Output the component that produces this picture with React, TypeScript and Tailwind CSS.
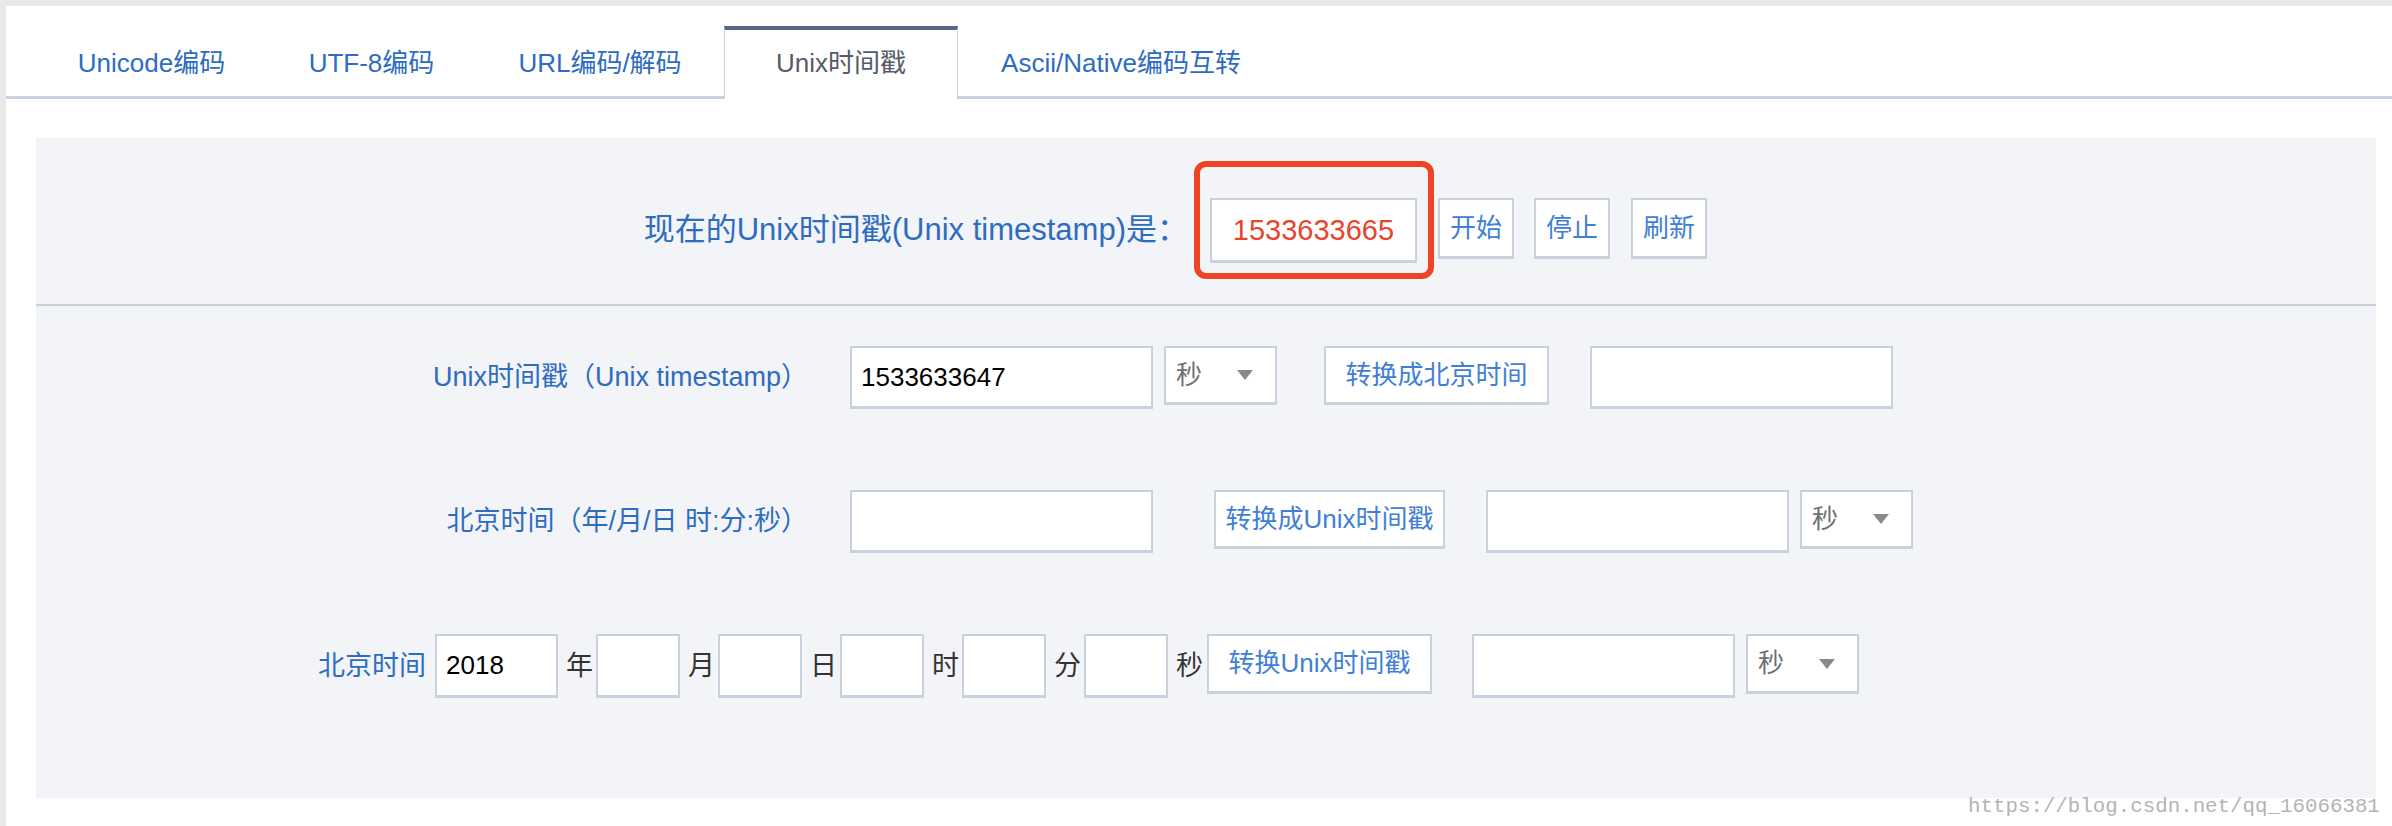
import React from "react";

const tabs = [
  { label: "Unicode编码", w: "w-[231px]" },
  { label: "UTF-8编码", w: "w-[209px]" },
  { label: "URL编码/解码", w: "w-[248px]" },
  { label: "Unix时间戳", w: "w-[234px]", active: true },
  { label: "Ascii/Native编码互转", w: "w-[326px]" },
];

function Box({ className = "", value = "", text = "text-black" }: { className?: string; value?: string; text?: string }) {
  return (
    <input
      readOnly
      value={value}
      className={`bg-white border-2 border-b-[3px] border-[#c9d0de] pl-[9px] text-[26px] outline-none ${text} ${className}`}
    />
  );
}

function Btn({ children, className = "" }: { children: React.ReactNode; className?: string }) {
  return (
    <button className={`bg-white border-2 border-b-[3px] border-[#c9d0de] text-[26px] text-[#3f80d6] flex items-center justify-center ${className}`}>
      {children}
    </button>
  );
}

function Unit({ className = "" }: { className?: string }) {
  return (
    <div className={`bg-white border-2 border-b-[3px] border-[#c9d0de] w-[113px] h-[59px] flex items-center justify-between pl-[10px] pr-[22px] ${className}`}>
      <span className="text-[26px] text-[#6f6f6f]">秒</span>
      <svg width="16" height="10" viewBox="0 0 16 10">
        <path d="M0 0h16L8 10z" fill="#8a8a8a" />
      </svg>
    </div>
  );
}

function Char({ c }: { c: string }) {
  return <span className="ml-[8px] mr-[3px] w-[27px] h-[64px] flex items-center text-[27px] text-[#333]">{c}</span>;
}

export default function App() {
  return (
    <div className="relative w-[2392px] h-[826px] bg-[#e8e8e8] pt-[6px] pl-[6px] overflow-hidden font-['Liberation_Sans','Noto_Sans_CJK_SC',sans-serif]">
      <div className="bg-white h-full flex flex-col">
        {/* tab bar */}
        <div className="h-[93px] flex items-end pl-[30px] border-b-[3px] border-[#c8cfdd]">
          {tabs.map((t) =>
            t.active ? (
              <div
                key={t.label}
                className={`${t.w} h-[73px] -mb-[3px] pb-[3px] bg-white border-t-4 border-t-[#5a6687] border-x border-x-[#c8cfdd] flex items-center justify-center text-[26px] text-[#555b68]`}
              >
                {t.label}
              </div>
            ) : (
              <div key={t.label} className={`${t.w} h-[66px] flex items-center justify-center text-[26px] text-[#2d6cc2]`}>
                {t.label}
              </div>
            )
          )}
        </div>

        {/* panel */}
        <div className="mt-[39px] ml-[30px] w-[2340px] h-[660px] bg-[#f3f4f8]">
          <div className="h-[168px] border-b-2 border-[#c8cfdd] flex items-start pt-[60px] pl-[601px]">
            <div className="w-[551px] h-[65px] mr-[22px] flex items-center justify-end text-[31px] text-[#2e6cc0] whitespace-nowrap">
              现在的Unix时间戳(Unix timestamp)是：
            </div>
            <div className="relative">
              <input
                readOnly
                value="1533633665"
                className="w-[207px] h-[65px] bg-white border-2 border-b-[3px] border-[#c9d0de] text-center text-[29px] text-[#e8442b] outline-none"
              />
              <span className="absolute -left-[16px] -top-[37px] w-[240px] h-[118px] border-[6px] border-[#ee4325] rounded-[12px]" />
            </div>
            <Btn className="ml-[21px] w-[76px] h-[61px]">开始</Btn>
            <Btn className="ml-[20px] w-[76px] h-[61px]">停止</Btn>
            <Btn className="ml-[21px] w-[76px] h-[61px]">刷新</Btn>
          </div>

          {/* row 1 */}
          <div className="mt-[40px] flex items-start">
            <div className="w-[772px] h-[63px] flex items-center justify-end text-[27px] text-[#2e6cc0] whitespace-nowrap">
              Unix时间戳（Unix timestamp）
            </div>
            <Box className="ml-[42px] w-[303px] h-[63px]" value="1533633647" />
            <Unit className="ml-[11px]" />
            <Btn className="ml-[47px] w-[225px] h-[59px]">转换成北京时间</Btn>
            <Box className="ml-[41px] w-[303px] h-[63px]" />
          </div>

          {/* row 2 */}
          <div className="mt-[81px] flex items-start">
            <div className="w-[772px] h-[63px] flex items-center justify-end text-[27px] text-[#2e6cc0] whitespace-nowrap">
              北京时间（年/月/日 时:分:秒）
            </div>
            <Box className="ml-[42px] w-[303px] h-[63px]" />
            <Btn className="ml-[61px] w-[231px] h-[59px]">转换成Unix时间戳</Btn>
            <Box className="ml-[41px] w-[303px] h-[63px]" />
            <Unit className="ml-[11px]" />
          </div>

          {/* row 3 */}
          <div className="mt-[81px] flex items-start pl-[282px]">
            <div className="h-[64px] flex items-center text-[27px] text-[#2e6cc0] whitespace-nowrap">北京时间</div>
            <Box className="ml-[9px] w-[123px] h-[64px]" value="2018" />
            <Char c="年" />
            <Box className="w-[84px] h-[64px]" />
            <Char c="月" />
            <Box className="w-[84px] h-[64px]" />
            <Char c="日" />
            <Box className="w-[84px] h-[64px]" />
            <Char c="时" />
            <Box className="w-[84px] h-[64px]" />
            <Char c="分" />
            <Box className="w-[84px] h-[64px]" />
            <Char c="秒" />
            <Btn className="ml-[1px] w-[225px] h-[60px]">转换Unix时间戳</Btn>
            <Box className="ml-[40px] w-[263px] h-[64px]" />
            <Unit className="ml-[11px] h-[60px]" />
          </div>
        </div>
      </div>

      {/* watermark */}
      <span className="absolute left-[1968px] top-[795px] leading-[24px] text-[20.8px] text-[#b4b4b4] font-['Liberation_Mono',monospace] whitespace-nowrap">
        https://blog.csdn.net/qq_16066381
      </span>
    </div>
  );
}
